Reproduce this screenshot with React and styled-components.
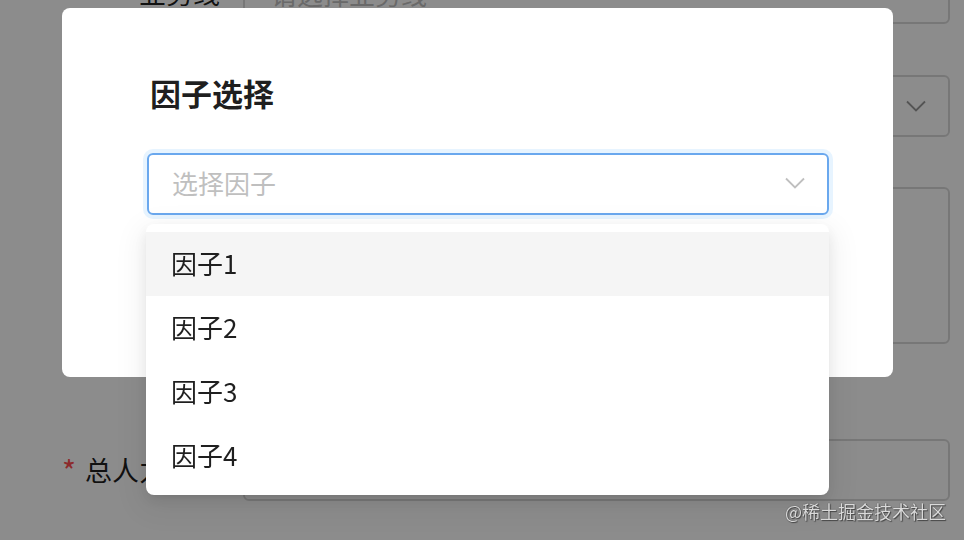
import React from 'react';
import styled, { createGlobalStyle } from 'styled-components';

const GlobalStyle = createGlobalStyle`
  html, body {
    margin: 0;
    height: 100%;
    overflow: hidden;
    background: #fff;
    font-family: "Noto Sans CJK SC", "Noto Sans", sans-serif;
  }
`;

// underlying form (behind the mask)
const Form = styled.div`
  margin-top: -38px;
  padding-right: 14px;
`;

const Row = styled.div`
  display: flex;
  align-items: ${(p) => (p.$top ? 'flex-start' : 'center')};
  margin-bottom: ${(p) => p.$gap || 0}px;
`;

const Label = styled.label`
  flex-shrink: 0;
  width: 243px;
  box-sizing: border-box;
  padding-right: 23px;
  padding-top: ${(p) => (p.$top ? 12 : 0)}px;
  text-align: right;
  font-size: 27px;
  line-height: 36px;
  color: rgba(0, 0, 0, 0.88);
`;

const Star = styled.span`
  color: #ff4d4f;
  font-size: 30px;
  margin-right: 9px;
  vertical-align: -2px;
`;

const Field = styled.div`
  flex: 1;
  height: ${(p) => p.$h || 62}px;
  box-sizing: border-box;
  border: 2px solid #d9d9d9;
  border-radius: 6px;
  display: flex;
  align-items: ${(p) => (p.$top ? 'flex-start' : 'center')};
  justify-content: space-between;
  padding: ${(p) => (p.$top ? '12px 26px' : '0 22px 0 26px')};
  font-size: 26px;
  color: #bfbfbf;
`;

// modal
const Mask = styled.div`
  position: fixed;
  inset: 0;
  background: rgba(0, 0, 0, 0.45);
`;

const ModalWrap = styled.div`
  position: fixed;
  inset: 0;
  padding: 8px 0 0 62px;
`;

const Modal = styled.div`
  width: 831px;
  min-height: 369px;
  box-sizing: border-box;
  background: #fff;
  border-radius: 8px;
  padding: 64px 64px 0 85px;
`;

const Title = styled.h2`
  margin: 0 0 39px;
  padding-left: 3px;
  font-size: 31px;
  font-weight: 600;
  line-height: 42px;
  color: rgba(0, 0, 0, 0.88);
`;

const SelectBox = styled.div`
  position: relative;
  width: 682px;
  height: 62px;
  box-sizing: border-box;
  border: 2px solid #6aa8ee;
  border-radius: 6px;
  box-shadow: 0 0 0 4px rgba(24, 144, 255, 0.1);
  display: flex;
  align-items: center;
  justify-content: space-between;
  padding: 0 22px 3px 23px;
`;

const Placeholder = styled.span`
  font-size: 26px;
  color: #bfbfbf;
`;

const Dropdown = styled.ul`
  position: absolute;
  top: calc(100% + 11px);
  left: -3px;
  width: 683px;
  margin: 0;
  padding: 8px 0 7px;
  list-style: none;
  background: #fff;
  border-radius: 8px;
  box-shadow: 0 6px 16px rgba(0, 0, 0, 0.08), 0 3px 6px -4px rgba(0, 0, 0, 0.12),
    0 9px 28px 8px rgba(0, 0, 0, 0.05);
`;

const Option = styled.li`
  height: 64px;
  box-sizing: border-box;
  display: flex;
  align-items: center;
  padding: 0 0 4px 25px;
  font-size: 26px;
  color: rgba(0, 0, 0, 0.88);
  background: ${(p) => (p.$active ? '#f5f5f5' : 'transparent')};
`;

const Watermark = styled.div`
  position: fixed;
  right: 18px;
  bottom: 16px;
  font-size: 18px;
  color: #dadada;
  text-shadow: 0 0 1px #333, 1px 1px 1px rgba(0, 0, 0, 0.5);
`;

const Chevron = ({ color = '#bfbfbf' }) => (
  <svg width="20" height="12" viewBox="0 0 20 12" fill="none">
    <polyline points="1,1.5 10,10.5 19,1.5" stroke={color} strokeWidth="1.8" />
  </svg>
);

const options = ['因子1', '因子2', '因子3', '因子4'];

const App = () => (
  <>
    <GlobalStyle />
    <Form>
      <Row $gap={51}>
        <Label>业务线</Label>
        <Field>请选择业务线</Field>
      </Row>
      <Row $gap={50}>
        <Label>所属项目</Label>
        <Field>
          请选择项目
          <Chevron color="#999" />
        </Field>
      </Row>
      <Row $top $gap={95}>
        <Label $top>
          <Star>*</Star>工作量说明
        </Label>
        <Field $top $h={157}>请输入</Field>
      </Row>
      <Row>
        <Label>
          <Star>*</Star>总人力投入
        </Label>
        <Field>请输入总人力</Field>
      </Row>
    </Form>

    <Mask />
    <ModalWrap>
      <Modal>
        <Title>因子选择</Title>
        <SelectBox>
          <Placeholder>选择因子</Placeholder>
          <Chevron />
          <Dropdown>
            {options.map((o, i) => (
              <Option key={o} $active={i === 0}>
                {o}
              </Option>
            ))}
          </Dropdown>
        </SelectBox>
      </Modal>
    </ModalWrap>

    <Watermark>@稀土掘金技术社区</Watermark>
  </>
);

export default App;
